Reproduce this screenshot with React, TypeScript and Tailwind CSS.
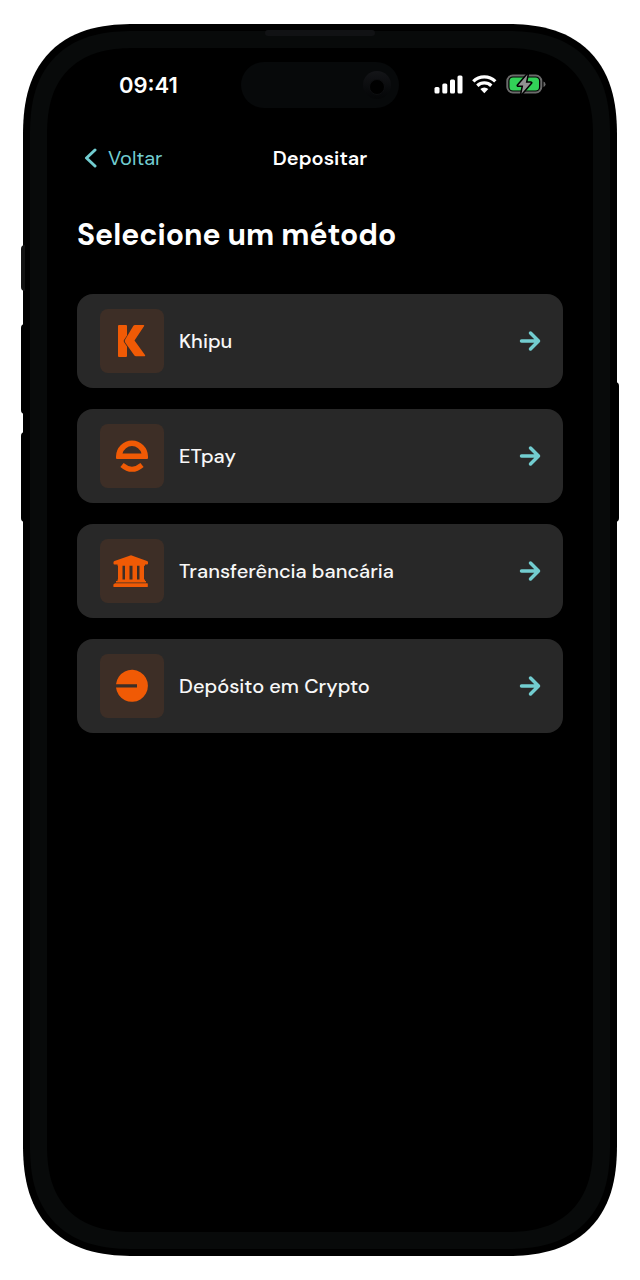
import React from 'react';

const KhipuIcon: React.FC = () => (
  <svg width="64" height="64" viewBox="0 0 64 64" fill="#f05a05">
    <path d="M19 16h7a1 1 0 0 1 1 1v9.500l-3.200 4.700v1.600l3.200 4.700v9.500a1 1 0 0 1-1 1h-7a1 1 0 0 1-1-1V17a1 1 0 0 1 1-1z" />
    <path d="M35 16h8.400q1.400 0 .6 1.200L34.500 31.500 45 46q.8 1.200-.6 1.200h-8.400q-1 0-1.600-.8L25.200 33.500q-1.100-1.500 0-3L33.400 16.800q.6-.8 1.600-.8z" />
  </svg>
);

const EtpayIcon: React.FC = () => (
  <svg width="64" height="64" viewBox="0 0 64 64" fill="none">
    <path
      d="M16 34v-1.500a16 16 0 0 1 32 0V34q0 1-1 1H17q-1 0-1-1zM22.500 29.500h19a9.800 9.800 0 0 0-19 0z"
      fill="#f05a05"
      fillRule="evenodd"
    />
    <path d="M22 41Q32 49.500 42 41" stroke="#f05a05" strokeWidth="5" />
  </svg>
);

const BankIcon: React.FC = () => (
  <svg width="64" height="64" viewBox="0 0 64 64" fill="#f05a05">
    <path d="M31 16.200 47 22q1 .4 1 1.200v1.200q0 1-1 1H45v1.300H17.500v-1.300H14.500q-1 0-1-1v-1.200q0-.8 1-1.200z" />
    <path d="M18 26h4.500v15H18zM25 26h4.500v15H25zM32.500 26H37v15h-4.500zM39.500 26H44v15h-4.500z" />
    <path d="M17.500 40.500h27.500v1.500h1v1.500H16v-1.500h1.500zM15 44.200h32.200q.6 0 .6.700v2.500q0 .6-.6.600H14q-.6 0-.6-.6V45.500z" />
  </svg>
);

const CryptoIcon: React.FC = () => (
  <svg width="64" height="64" viewBox="0 0 64 64" fill="#f05a05">
    <path d="M16 30.200a16 16 0 1 1 0 3.300h21v-3.300z" />
  </svg>
);

const METHODS = [
  { name: 'Khipu', icon: KhipuIcon },
  { name: 'ETpay', icon: EtpayIcon },
  { name: 'Transferência bancária', icon: BankIcon },
  { name: 'Depósito em Crypto', icon: CryptoIcon },
];

const StatusIcons: React.FC = () => (
  <svg width="112" height="24" viewBox="0 0 112 24" fill="none">
    <g fill="#fff">
      <rect x="0.500" y="14" width="5" height="6.500" rx="1.500" />
      <rect x="8.300" y="10.500" width="5" height="10" rx="1.500" />
      <rect x="16" y="6.500" width="5" height="14" rx="1.500" />
      <rect x="23.500" y="2.500" width="5" height="18" rx="1.500" />
    </g>
    <g stroke="#fff" strokeWidth="3.300">
      <path d="M39.300 8.400a15.500 15.500 0 0 1 22 0" />
      <path d="M43.300 12.700a10 10 0 0 1 14 0" />
    </g>
    <path d="M46.300 16a6 6 0 0 1 8 0l-4 4.200z" fill="#fff" />
    <rect x="73.300" y="2.500" width="34" height="17" rx="5.500" stroke="#6b6b6b" strokeWidth="2" />
    <rect x="75.500" y="4.500" width="29.500" height="13" rx="3.500" fill="#32d158" />
    <path d="M109.500 8.500v5.500q2-.7 2-2.700t-2-2.800z" fill="#6b6b6b" />
    <path
      d="M93.500 1.500 84 12.500h5.200L87.500 20.800 97 9.800h-5.200z"
      fill="#929292"
      stroke="#000"
      strokeWidth="3"
      strokeLinejoin="round"
      paintOrder="stroke"
    />
  </svg>
);

const StatusBar: React.FC = () => (
  <div className="grid grid-cols-[1fr_158px_1fr] items-center text-white">
    <span className="pl-[72px] font-['Inter',sans-serif] text-[22px] leading-7 font-semibold">09:41</span>
    <div className="h-[46px] rounded-full bg-[#07090a] flex items-center justify-end pr-2">
      <div className="size-7 rounded-full bg-linear-to-b from-[#141518] to-[#050607] flex items-end justify-center pb-1">
        <div className="size-4 rounded-full bg-black border border-[#0d0e10]" />
      </div>
    </div>
    <div className="flex justify-end pr-[47px]">
      <StatusIcons />
    </div>
  </div>
);

const App: React.FC = () => {
  return (
    <div className="min-h-screen bg-white px-[23px] py-6 flex font-['DM_Sans',Inter,sans-serif]">
      <div className="relative flex-1 flex rounded-[112px] [corner-shape:superellipse(1.3)] bg-black p-[7px]">
        {/* Side buttons */}
        <div className="absolute -left-0.5 top-[221px] w-1 h-[46px] rounded-l-sm bg-[#111]" />
        <div className="absolute -left-0.5 top-[300px] w-1 h-[90px] rounded-l-sm bg-black" />
        <div className="absolute -left-0.5 top-[408px] w-1 h-[90px] rounded-l-sm bg-black" />
        <div className="absolute -right-0.5 top-[358px] w-1 h-[140px] rounded-r-sm bg-black" />
        {/* Earpiece */}
        <div className="absolute left-1/2 -translate-x-1/2 top-[6px] z-10 w-[110px] h-[6px] rounded-sm bg-[#111214]" />

        <div className="flex-1 flex rounded-[104px] [corner-shape:superellipse(1.3)] bg-[#080a0a] p-[17px]">
          <main className="flex-1 rounded-[88px] [corner-shape:superellipse(1.3)] bg-black pt-[14px]">
            <StatusBar />

            <nav className="mt-[34px] px-[30px] grid grid-cols-[1fr_auto_1fr] items-center">
              <button className="justify-self-start flex items-center gap-2.5 pl-[7px] text-[20px] leading-8 text-[#72cdd0]">
                <svg width="14" height="20" viewBox="0 0 14 20" fill="none" stroke="currentColor" strokeWidth="3" strokeLinecap="round" strokeLinejoin="round">
                  <path d="M11 2 2.500 10l8.500 8" />
                </svg>
                Voltar
              </button>
              <span className="text-[20px] leading-8 font-semibold text-white">Depositar</span>
            </nav>

            <h1 className="mt-10 px-[30px] text-[30px] leading-[42px] font-bold text-white">Selecione um método</h1>

            <ul className="mt-[38px] px-[30px] flex flex-col gap-[21px]">
              {METHODS.map(method => (
                <li key={method.name}>
                  <button className="w-full h-[94px] rounded-2xl bg-[#282828] pl-[23px] pr-[22px] flex items-center text-left">
                    <span className="size-16 rounded-lg bg-[#3d2e26] flex items-center justify-center">
                      <method.icon />
                    </span>
                    <span className="pl-[15px] flex-1 text-[20px] leading-8 font-medium text-[#f7f7f7]">{method.name}</span>
                    <svg width="22" height="22" viewBox="0 0 22 22" fill="none" stroke="#72cdd0" strokeWidth="3.500" strokeLinecap="round" strokeLinejoin="round">
                      <path d="M2.500 11h17M11.500 3l8 8-8 8" />
                    </svg>
                  </button>
                </li>
              ))}
            </ul>
          </main>
        </div>
      </div>
    </div>
  );
};

export default App;
